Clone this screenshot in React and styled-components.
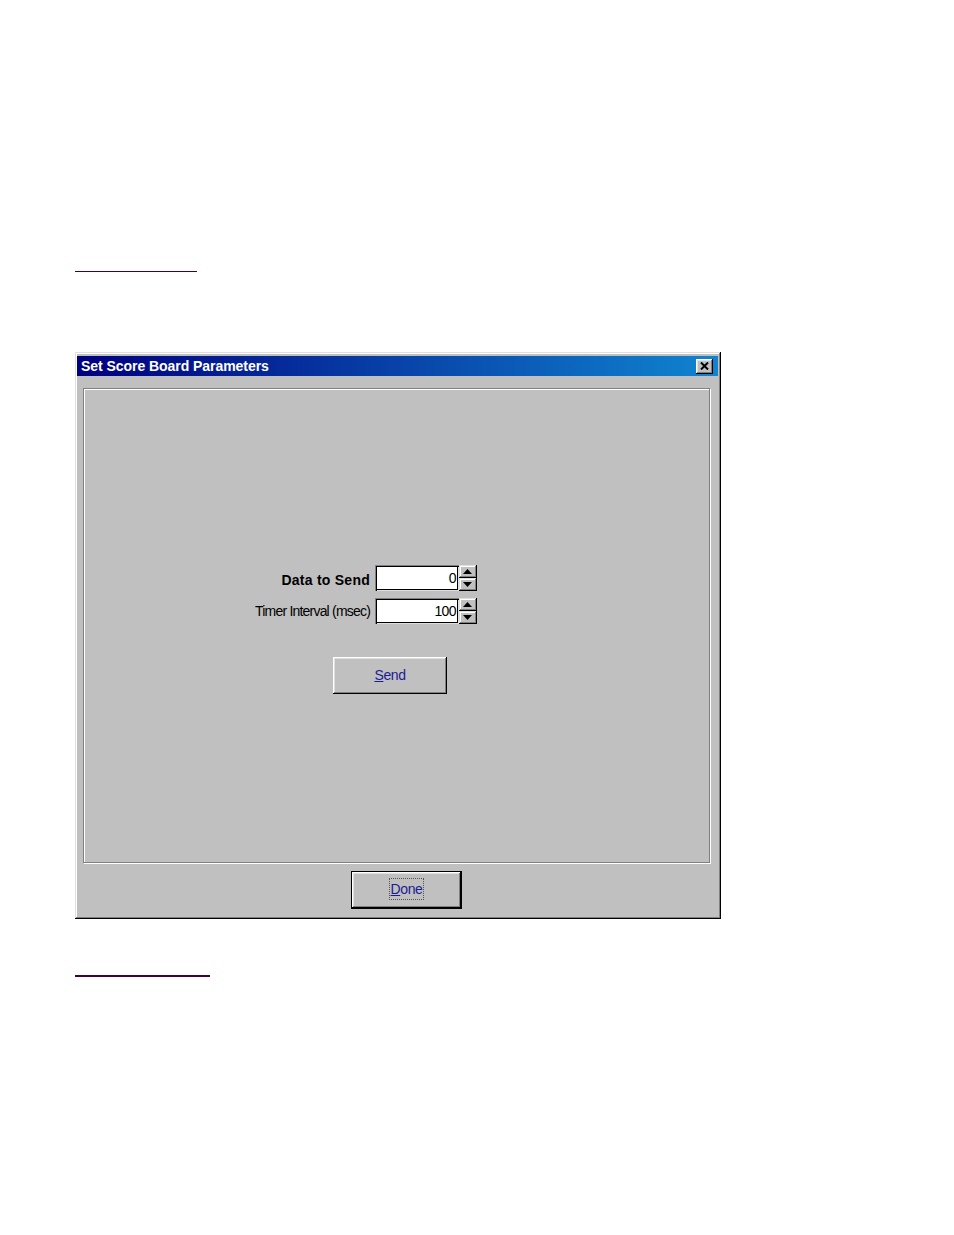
import React from "react";
import styled, { createGlobalStyle } from "styled-components";

const Global = createGlobalStyle`
  html, body { margin: 0; padding: 0; background: #ffffff; }
  body { font-family: "Liberation Sans", Arial, sans-serif; }
`;

const Page = styled.div`
  padding: 271px 0 0 75px;
  width: 954px;
  height: 1235px;
  box-sizing: border-box;
`;

const Rule = styled.div`
  width: ${(p) => p.$w}px;
  height: ${(p) => p.$h}px;
  background: #400040;
  margin-top: ${(p) => p.$mt || 0}px;
`;

const Window = styled.div`
  margin-top: 80px;
  width: 646px;
  height: 567px;
  box-sizing: border-box;
  background: #c0c0c0;
  padding: 4px 3px 0 2px;
  box-shadow: inset -1px -1px 0 #000000, inset 1px 1px 0 #dfdfdf,
    inset -2px -2px 0 #808080, inset 2px 2px 0 #ffffff;
  display: flex;
  flex-direction: column;
`;

const TitleBar = styled.div`
  height: 20px;
  background: linear-gradient(to right, #000080, #1084d0);
  display: flex;
  align-items: center;
  justify-content: space-between;
  padding: 0 5px 0 4px;
`;

const Title = styled.span`
  color: #ffffff;
  font-weight: bold;
  font-size: 14px;
  letter-spacing: -0.05px;
`;

const CloseButton = styled.div`
  width: 17px;
  height: 15px;
  box-sizing: border-box;
  background: #c0c0c0;
  box-shadow: inset -1px -1px 0 #000000, inset 1px 1px 0 #ffffff,
    inset -2px -2px 0 #808080, inset 2px 2px 0 #dfdfdf;
  display: flex;
  align-items: center;
  justify-content: center;
`;

const Body = styled.div`
  padding: 12px 0 0 6px;
`;

const GroupBox = styled.div`
  width: 627px;
  height: 475px;
  box-sizing: border-box;
  border: 1px solid #808080;
  box-shadow: 1px 1px 0 #ffffff, inset 1px 1px 0 #ffffff;
  padding: 176px 0 0 166px;
`;

const FormGrid = styled.div`
  display: grid;
  grid-template-columns: 120px auto;
  column-gap: 5px;
  row-gap: 7px;
  align-items: center;
  width: max-content;
`;

const Field = styled.div`
  display: flex;
`;

const Label = styled.label`
  justify-self: end;
  font-size: 14px;
  font-weight: ${(p) => (p.$bold ? "bold" : "normal")};
  letter-spacing: ${(p) => (p.$bold ? "0.25px" : "-0.8px")};
  padding-top: ${(p) => (p.$bold ? 3 : 0)}px;
  color: #000000;
  white-space: nowrap;
`;

const Edit = styled.div`
  width: 84px;
  height: 26px;
  box-sizing: border-box;
  background: #ffffff;
  box-shadow: inset 1px 1px 0 #808080, inset 2px 2px 0 #000000,
    inset -1px -1px 0 #dfdfdf, inset -2px -2px 0 #000000;
  display: flex;
  align-items: center;
  justify-content: flex-end;
  padding-right: 3px;
  font-size: 14px;
  letter-spacing: -0.6px;
  color: #000;
`;

const Spin = styled.div`
  width: 18px;
  height: 26px;
  display: flex;
  flex-direction: column;
`;

const SpinHalf = styled.div`
  flex: 1;
  box-sizing: border-box;
  background: #c0c0c0;
  box-shadow: inset -1px -1px 0 #000000, inset 1px 1px 0 #dfdfdf,
    inset -2px -2px 0 #808080, inset 2px 2px 0 #ffffff;
  display: flex;
  align-items: center;
  justify-content: center;
  padding-right: 1px;
`;

const PushButton = styled.button`
  display: flex;
  align-items: center;
  justify-content: center;
  width: ${(p) => p.$w}px;
  height: ${(p) => p.$h}px;
  box-sizing: border-box;
  background: #c0c0c0;
  border: ${(p) => (p.$default ? "1px solid #000" : "none")};
  padding: 0 0 ${(p) => p.$lift || 0}px 0;
  margin: ${(p) => p.$margin};
  font-family: "Liberation Sans", Arial, sans-serif;
  font-size: 14px;
  letter-spacing: -0.4px;
  color: #1c1c94;
  box-shadow: inset -1px -1px 0 #000000, inset 1px 1px 0 #ffffff,
    inset -2px -2px 0 #808080, inset 2px 2px 0 #dfdfdf;
`;

const Focus = styled.span`
  outline: 1px dotted #555;
  padding: 2px 1px;
`;

const Mn = styled.span`
  text-decoration: underline;
`;

const Footer = styled.div`
  padding: 8px 0 0 268px;
`;

const Arrow = ({ down }) => (
  <svg width="9" height="5" viewBox="0 0 9 5">
    {down ? (
      <polygon points="0,0 9,0 4.5,5" fill="#000" />
    ) : (
      <polygon points="0,5 9,5 4.5,0" fill="#000" />
    )}
  </svg>
);

const SpinField = ({ value }) => (
  <Field>
    <Edit>{value}</Edit>
    <Spin>
      <SpinHalf>
        <Arrow />
      </SpinHalf>
      <SpinHalf>
        <Arrow down />
      </SpinHalf>
    </Spin>
  </Field>
);

export default function App() {
  return (
    <>
      <Global />
      <Page>
        <Rule $w={122} $h={1} />
        <Window>
          <TitleBar>
            <Title>Set Score Board Parameters</Title>
            <CloseButton>
              <svg width="9" height="8" viewBox="0 0 9 8">
                <path d="M1 0.5 L8 7.5 M8 0.5 L1 7.5" stroke="#000" strokeWidth="2" />
              </svg>
            </CloseButton>
          </TitleBar>
          <Body>
            <GroupBox>
              <FormGrid>
                <Label $bold>Data to Send</Label>
                <SpinField value="0" />
                <Label>Timer Interval (msec)</Label>
                <SpinField value="100" />
              </FormGrid>
              <PushButton $w={114} $h={37} $lift={2} $margin="33px 0 0 83px">
                <span>
                  <Mn>S</Mn>end
                </span>
              </PushButton>
            </GroupBox>
            <Footer>
              <PushButton $w={111} $h={38} $lift={3} $default $margin="0">
                <Focus>
                  <Mn>D</Mn>one
                </Focus>
              </PushButton>
            </Footer>
          </Body>
        </Window>
        <Rule $w={135} $h={2} $mt={56} />
      </Page>
    </>
  );
}
